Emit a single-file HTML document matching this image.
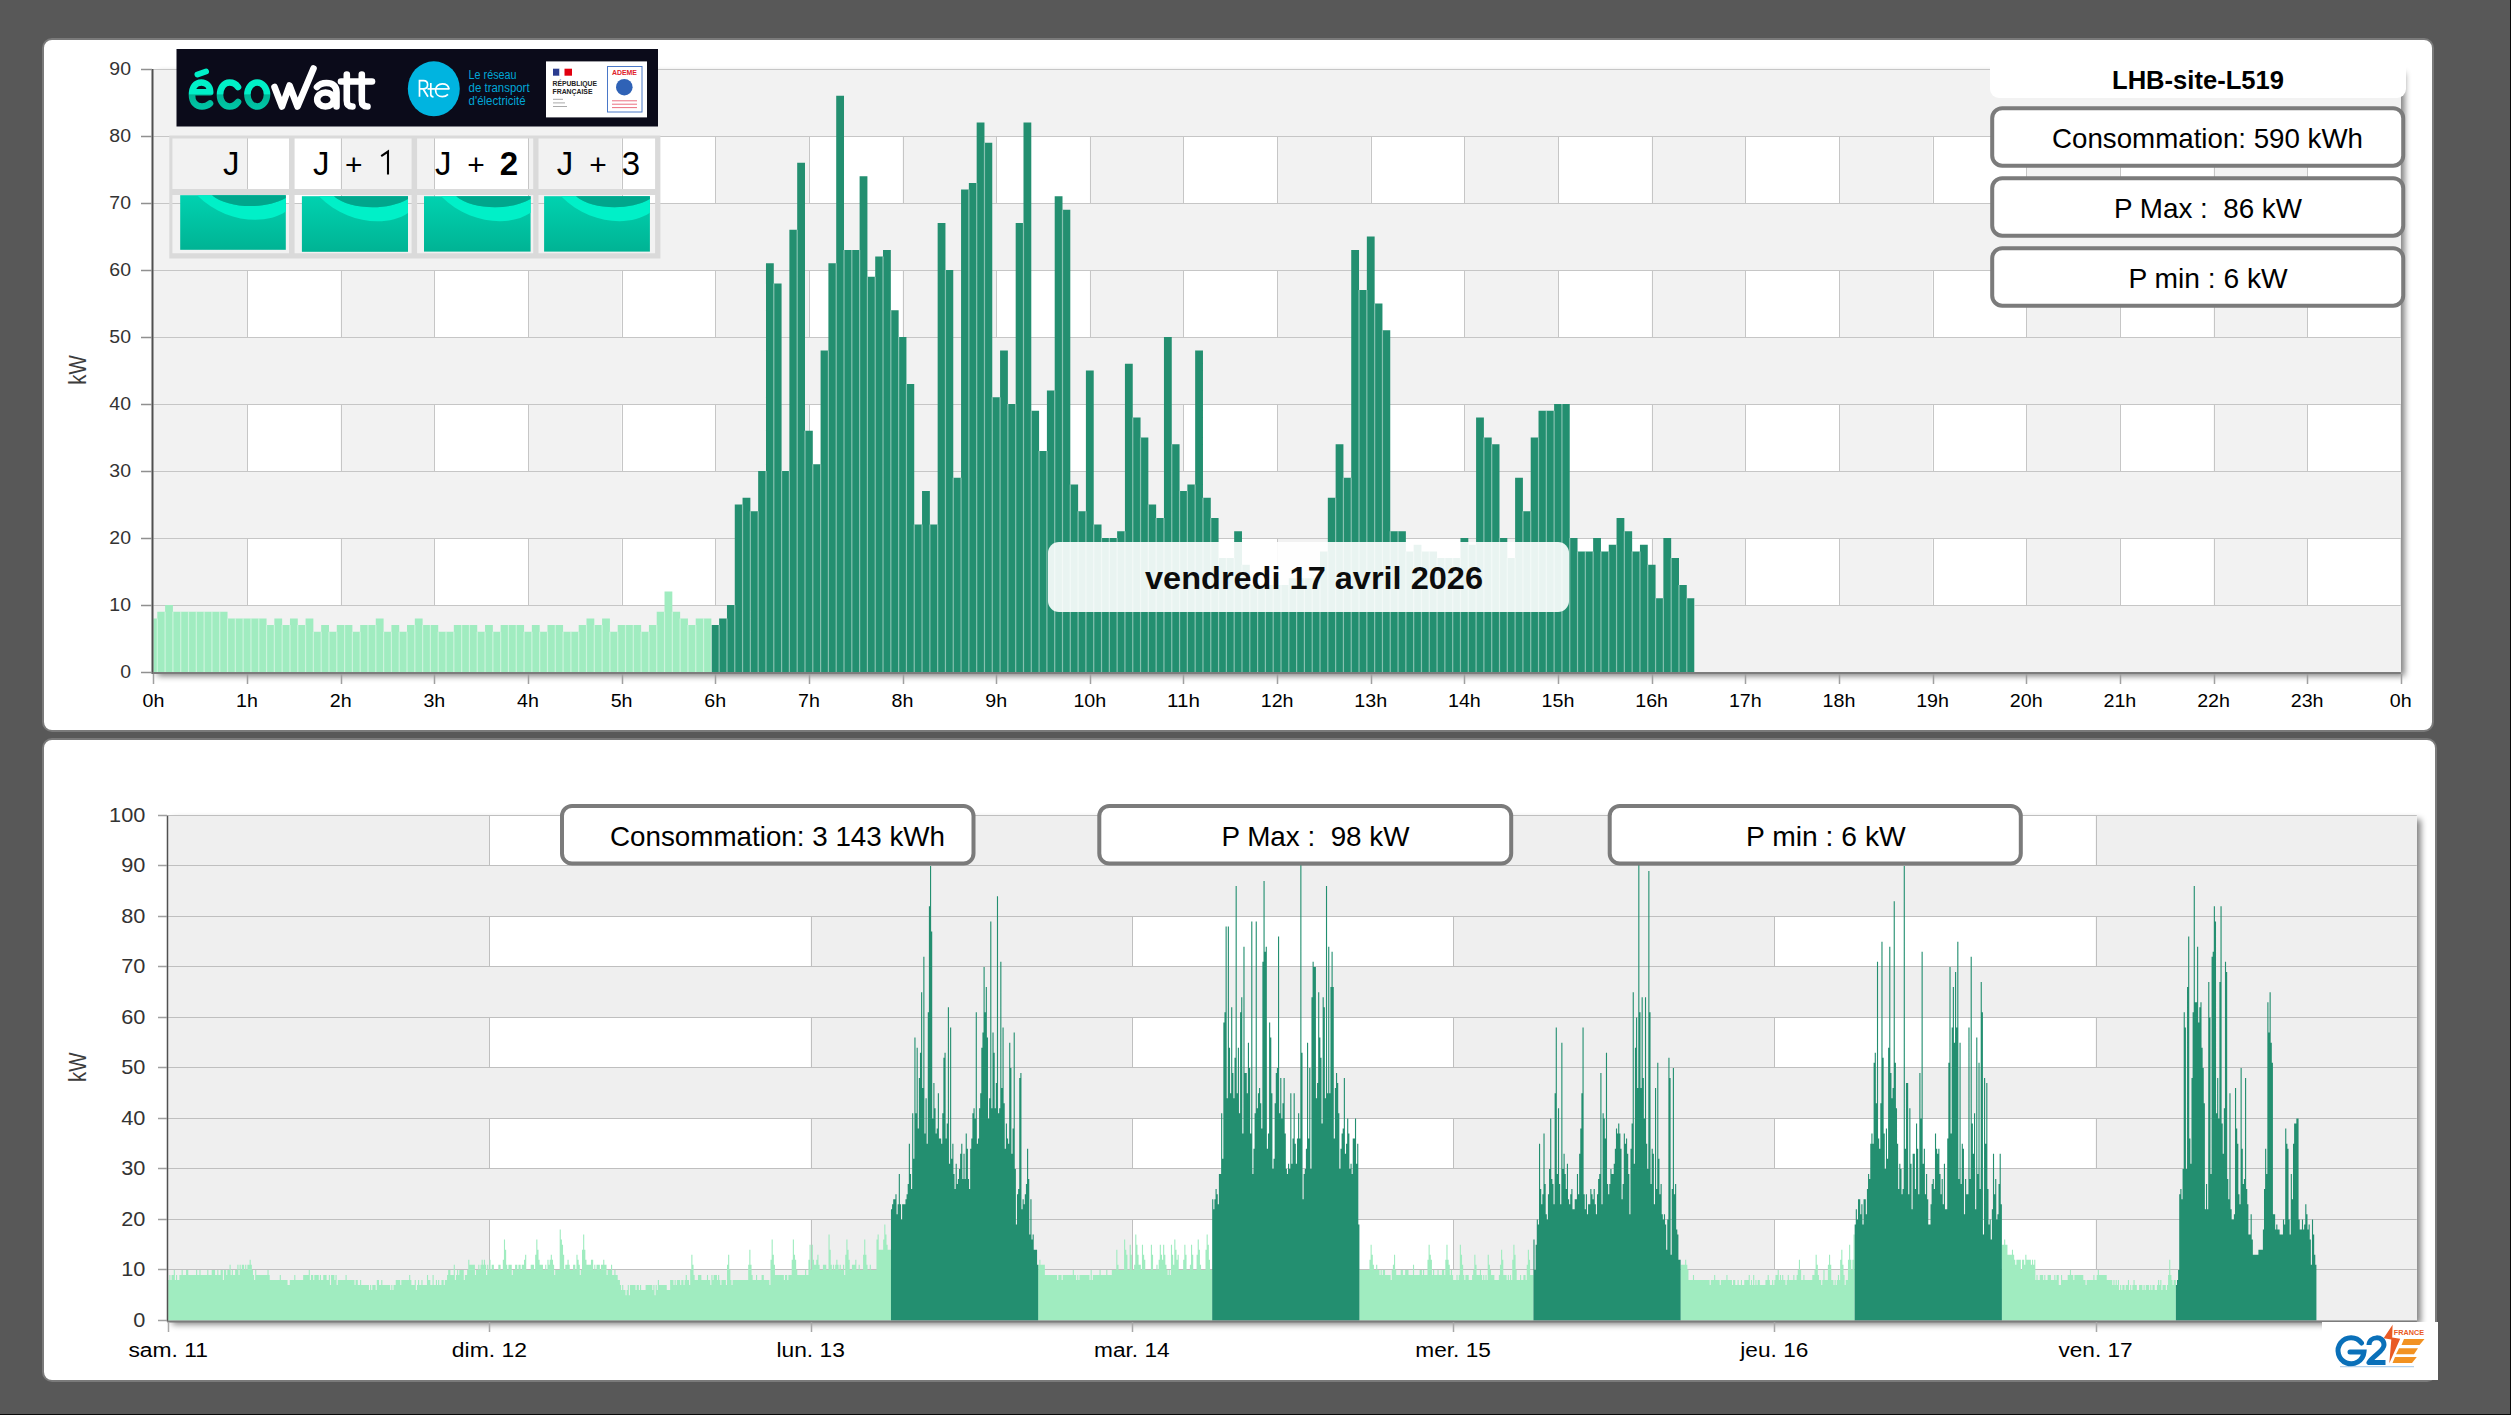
<!DOCTYPE html><html><head><meta charset="utf-8"><style>html,body{margin:0;padding:0;background:#585858;width:2511px;height:1415px;overflow:hidden}svg{display:block;font-family:"Liberation Sans", sans-serif}</style></head><body>
<svg width="2511" height="1415" viewBox="0 0 2511 1415">
<defs>
<filter id="psh" x="-5%" y="-5%" width="110%" height="115%"><feGaussianBlur in="SourceAlpha" stdDeviation="3.2"/><feOffset dx="4" dy="4"/><feComponentTransfer><feFuncA type="linear" slope="0.5"/></feComponentTransfer><feMerge><feMergeNode/></feMerge></filter>
<filter id="bsh" x="-10%" y="-30%" width="120%" height="160%"><feGaussianBlur in="SourceAlpha" stdDeviation="1.8"/><feOffset dx="2.5" dy="2.5"/><feComponentTransfer><feFuncA type="linear" slope="0.3"/></feComponentTransfer><feMerge><feMergeNode/><feMergeNode in="SourceGraphic"/></feMerge></filter>
<linearGradient id="tealg" x1="0" y1="0" x2="0" y2="1"><stop offset="0" stop-color="#00d2b0"/><stop offset="1" stop-color="#00b394"/></linearGradient>
<linearGradient id="ecog" gradientUnits="userSpaceOnUse" x1="0" y1="70" x2="0" y2="110"><stop offset="0.6" stop-color="#00f0c8"/><stop offset="0.62" stop-color="#00b596"/><stop offset="1" stop-color="#00c8a8"/></linearGradient>
</defs>
<rect x="0" y="0" width="2511" height="1415" fill="#585858"/>
<rect x="2510" y="0" width="1" height="1415" fill="#0a0a0a"/>
<rect x="0" y="1414" width="2511" height="1" fill="#0a0a0a"/>
<rect x="43" y="39" width="2390" height="692" rx="9" fill="#fff" stroke="#7a7a7a" stroke-width="2"/>
<rect x="43" y="739" width="2393" height="642" rx="9" fill="#fff" stroke="#7a7a7a" stroke-width="2"/>
<rect x="153.4" y="69" width="2247.4" height="603" fill="#000" filter="url(#psh)"/>
<rect x="153.4" y="69" width="2247.4" height="603" fill="#fff"/>
<rect x="153.4" y="69" width="93.64" height="603" fill="#f2f2f2"/>
<rect x="340.68" y="69" width="93.64" height="603" fill="#f2f2f2"/>
<rect x="527.97" y="69" width="93.64" height="603" fill="#f2f2f2"/>
<rect x="715.25" y="69" width="93.64" height="603" fill="#f2f2f2"/>
<rect x="902.53" y="69" width="93.64" height="603" fill="#f2f2f2"/>
<rect x="1089.82" y="69" width="93.64" height="603" fill="#f2f2f2"/>
<rect x="1277.1" y="69" width="93.64" height="603" fill="#f2f2f2"/>
<rect x="1464.38" y="69" width="93.64" height="603" fill="#f2f2f2"/>
<rect x="1651.67" y="69" width="93.64" height="603" fill="#f2f2f2"/>
<rect x="1838.95" y="69" width="93.64" height="603" fill="#f2f2f2"/>
<rect x="2026.23" y="69" width="93.64" height="603" fill="#f2f2f2"/>
<rect x="2213.52" y="69" width="93.64" height="603" fill="#f2f2f2"/>
<path d="M247.5 69V672M341.5 69V672M434.5 69V672M528.5 69V672M622.5 69V672M715.5 69V672M809.5 69V672M903.5 69V672M996.5 69V672M1090.5 69V672M1183.5 69V672M1277.5 69V672M1371.5 69V672M1464.5 69V672M1558.5 69V672M1652.5 69V672M1745.5 69V672M1839.5 69V672M1933.5 69V672M2026.5 69V672M2120.5 69V672M2214.5 69V672M2307.5 69V672" stroke="#c6c6c6" stroke-width="1" fill="none"/>
<rect x="153.4" y="605" width="2247.4" height="67" fill="#f2f2f2"/>
<rect x="153.4" y="471" width="2247.4" height="67" fill="#f2f2f2"/>
<rect x="153.4" y="337" width="2247.4" height="67" fill="#f2f2f2"/>
<rect x="153.4" y="203" width="2247.4" height="67" fill="#f2f2f2"/>
<rect x="153.4" y="69" width="2247.4" height="67" fill="#f2f2f2"/>
<path d="M153.4 672.5H2400.8M153.4 605.5H2400.8M153.4 538.5H2400.8M153.4 471.5H2400.8M153.4 404.5H2400.8M153.4 337.5H2400.8M153.4 270.5H2400.8M153.4 203.5H2400.8M153.4 136.5H2400.8M153.4 69.5H2400.8" stroke="#c6c6c6" stroke-width="1" fill="none"/>
<path d="M153.4 618.4H157.3V672H153.4ZM157.3 611.7H165.11V672H157.3ZM165.11 605H172.91V672H165.11ZM172.91 611.7H180.71V672H172.91ZM180.71 611.7H188.52V672H180.71ZM188.52 611.7H196.32V672H188.52ZM196.32 611.7H204.12V672H196.32ZM204.12 611.7H211.93V672H204.12ZM211.93 611.7H219.73V672H211.93ZM219.73 611.7H227.53V672H219.73ZM227.53 618.4H235.34V672H227.53ZM235.34 618.4H243.14V672H235.34ZM243.14 618.4H250.94V672H243.14ZM250.94 618.4H258.75V672H250.94ZM258.75 618.4H266.55V672H258.75ZM266.55 625.1H274.35V672H266.55ZM274.35 618.4H282.16V672H274.35ZM282.16 625.1H289.96V672H282.16ZM289.96 618.4H297.76V672H289.96ZM297.76 625.1H305.57V672H297.76ZM305.57 618.4H313.37V672H305.57ZM313.37 631.8H321.17V672H313.37ZM321.17 625.1H328.98V672H321.17ZM328.98 631.8H336.78V672H328.98ZM336.78 625.1H344.59V672H336.78ZM344.59 625.1H352.39V672H344.59ZM352.39 631.8H360.19V672H352.39ZM360.19 625.1H368V672H360.19ZM368 625.1H375.8V672H368ZM375.8 618.4H383.6V672H375.8ZM383.6 631.8H391.41V672H383.6ZM391.41 625.1H399.21V672H391.41ZM399.21 631.8H407.01V672H399.21ZM407.01 625.1H414.82V672H407.01ZM414.82 618.4H422.62V672H414.82ZM422.62 625.1H430.42V672H422.62ZM430.42 625.1H438.23V672H430.42ZM438.23 631.8H446.03V672H438.23ZM446.03 631.8H453.83V672H446.03ZM453.83 625.1H461.64V672H453.83ZM461.64 625.1H469.44V672H461.64ZM469.44 625.1H477.24V672H469.44ZM477.24 631.8H485.05V672H477.24ZM485.05 625.1H492.85V672H485.05ZM492.85 631.8H500.65V672H492.85ZM500.65 625.1H508.46V672H500.65ZM508.46 625.1H516.26V672H508.46ZM516.26 625.1H524.06V672H516.26ZM524.06 631.8H531.87V672H524.06ZM531.87 625.1H539.67V672H531.87ZM539.67 631.8H547.48V672H539.67ZM547.48 625.1H555.28V672H547.48ZM555.28 625.1H563.08V672H555.28ZM563.08 631.8H570.89V672H563.08ZM570.89 631.8H578.69V672H570.89ZM578.69 625.1H586.49V672H578.69ZM586.49 618.4H594.3V672H586.49ZM594.3 625.1H602.1V672H594.3ZM602.1 618.4H609.9V672H602.1ZM609.9 631.8H617.71V672H609.9ZM617.71 625.1H625.51V672H617.71ZM625.51 625.1H633.31V672H625.51ZM633.31 625.1H641.12V672H633.31ZM641.12 631.8H648.92V672H641.12ZM648.92 625.1H656.72V672H648.92ZM656.72 611.7H664.53V672H656.72ZM664.53 591.6H672.33V672H664.53ZM672.33 611.7H680.13V672H672.33ZM680.13 618.4H687.94V672H680.13ZM687.94 625.1H695.74V672H687.94ZM695.74 618.4H703.54V672H695.74ZM703.54 618.4H711.35V672H703.54Z" fill="#a0ecc0"/>
<path d="M711.35 625.1H719.15V672H711.35ZM719.15 618.4H726.96V672H719.15ZM726.96 605H734.76V672H726.96ZM734.76 504.5H742.56V672H734.76ZM742.56 497.8H750.37V672H742.56ZM750.37 511.2H758.17V672H750.37ZM758.17 471H765.97V672H758.17ZM765.97 263.3H773.78V672H765.97ZM773.78 283.4H781.58V672H773.78ZM781.58 471H789.38V672H781.58ZM789.38 229.8H797.19V672H789.38ZM797.19 162.8H804.99V672H797.19ZM804.99 430.8H812.79V672H804.99ZM812.79 464.3H820.6V672H812.79ZM820.6 350.4H828.4V672H820.6ZM828.4 263.3H836.2V672H828.4ZM836.2 95.8H844.01V672H836.2ZM844.01 249.9H851.81V672H844.01ZM851.81 249.9H859.61V672H851.81ZM859.61 176.2H867.42V672H859.61ZM867.42 276.7H875.22V672H867.42ZM875.22 256.6H883.02V672H875.22ZM883.02 249.9H890.83V672H883.02ZM890.83 310.2H898.63V672H890.83ZM898.63 337H906.44V672H898.63ZM906.44 383.9H914.24V672H906.44ZM914.24 524.6H922.04V672H914.24ZM922.04 491.1H929.85V672H922.04ZM929.85 524.6H937.65V672H929.85ZM937.65 223.1H945.45V672H937.65ZM945.45 270H953.26V672H945.45ZM953.26 477.7H961.06V672H953.26ZM961.06 189.6H968.86V672H961.06ZM968.86 182.9H976.67V672H968.86ZM976.67 122.6H984.47V672H976.67ZM984.47 142.7H992.27V672H984.47ZM992.27 397.3H1000.08V672H992.27ZM1000.08 350.4H1007.88V672H1000.08ZM1007.88 404H1015.68V672H1007.88ZM1015.68 223.1H1023.49V672H1015.68ZM1023.49 122.6H1031.29V672H1023.49ZM1031.29 410.7H1039.09V672H1031.29ZM1039.09 450.9H1046.9V672H1039.09ZM1046.9 390.6H1054.7V672H1046.9ZM1054.7 196.3H1062.5V672H1054.7ZM1062.5 209.7H1070.31V672H1062.5ZM1070.31 484.4H1078.11V672H1070.31ZM1078.11 511.2H1085.91V672H1078.11ZM1085.91 370.5H1093.72V672H1085.91ZM1093.72 524.6H1101.52V672H1093.72ZM1101.52 538H1109.33V672H1101.52ZM1109.33 538H1117.13V672H1109.33ZM1117.13 531.3H1124.93V672H1117.13ZM1124.93 363.8H1132.74V672H1124.93ZM1132.74 417.4H1140.54V672H1132.74ZM1140.54 437.5H1148.34V672H1140.54ZM1148.34 504.5H1156.15V672H1148.34ZM1156.15 517.9H1163.95V672H1156.15ZM1163.95 337H1171.75V672H1163.95ZM1171.75 444.2H1179.56V672H1171.75ZM1179.56 491.1H1187.36V672H1179.56ZM1187.36 484.4H1195.16V672H1187.36ZM1195.16 350.4H1202.97V672H1195.16ZM1202.97 497.8H1210.77V672H1202.97ZM1210.77 517.9H1218.57V672H1210.77ZM1218.57 558.1H1226.38V672H1218.57ZM1226.38 558.1H1234.18V672H1226.38ZM1234.18 531.3H1241.98V672H1234.18ZM1241.98 564.8H1249.79V672H1241.98ZM1249.79 584.9H1257.59V672H1249.79ZM1257.59 584.9H1265.39V672H1257.59ZM1265.39 584.9H1273.2V672H1265.39ZM1273.2 584.9H1281V672H1273.2ZM1281 584.9H1288.81V672H1281ZM1288.81 578.2H1296.61V672H1288.81ZM1296.61 578.2H1304.41V672H1296.61ZM1304.41 578.2H1312.22V672H1304.41ZM1312.22 578.2H1320.02V672H1312.22ZM1320.02 551.4H1327.82V672H1320.02ZM1327.82 497.8H1335.63V672H1327.82ZM1335.63 444.2H1343.43V672H1335.63ZM1343.43 477.7H1351.23V672H1343.43ZM1351.23 249.9H1359.04V672H1351.23ZM1359.04 290.1H1366.84V672H1359.04ZM1366.84 236.5H1374.64V672H1366.84ZM1374.64 303.5H1382.45V672H1374.64ZM1382.45 330.3H1390.25V672H1382.45ZM1390.25 531.3H1398.05V672H1390.25ZM1398.05 531.3H1405.86V672H1398.05ZM1405.86 551.4H1413.66V672H1405.86ZM1413.66 544.7H1421.46V672H1413.66ZM1421.46 551.4H1429.27V672H1421.46ZM1429.27 551.4H1437.07V672H1429.27ZM1437.07 558.1H1444.87V672H1437.07ZM1444.87 558.1H1452.68V672H1444.87ZM1452.68 558.1H1460.48V672H1452.68ZM1460.48 538H1468.29V672H1460.48ZM1468.29 544.7H1476.09V672H1468.29ZM1476.09 417.4H1483.89V672H1476.09ZM1483.89 437.5H1491.7V672H1483.89ZM1491.7 444.2H1499.5V672H1491.7ZM1499.5 538H1507.3V672H1499.5ZM1507.3 558.1H1515.11V672H1507.3ZM1515.11 477.7H1522.91V672H1515.11ZM1522.91 511.2H1530.71V672H1522.91ZM1530.71 437.5H1538.52V672H1530.71ZM1538.52 410.7H1546.32V672H1538.52ZM1546.32 410.7H1554.12V672H1546.32ZM1554.12 404H1561.93V672H1554.12ZM1561.93 404H1569.73V672H1561.93ZM1569.73 538H1577.53V672H1569.73ZM1577.53 551.4H1585.34V672H1577.53ZM1585.34 551.4H1593.14V672H1585.34ZM1593.14 538H1600.94V672H1593.14ZM1600.94 551.4H1608.75V672H1600.94ZM1608.75 544.7H1616.55V672H1608.75ZM1616.55 517.9H1624.35V672H1616.55ZM1624.35 531.3H1632.16V672H1624.35ZM1632.16 551.4H1639.96V672H1632.16ZM1639.96 544.7H1647.76V672H1639.96ZM1647.76 564.8H1655.57V672H1647.76ZM1655.57 598.3H1663.37V672H1655.57ZM1663.37 538H1671.18V672H1663.37ZM1671.18 558.1H1678.98V672H1671.18ZM1678.98 584.9H1686.78V672H1678.98ZM1686.78 598.3H1694.59V672H1686.78Z" fill="#238f70"/>
<path d="M157.3 618.4V672M165.11 611.7V672M172.91 611.7V672M180.71 611.7V672M188.52 611.7V672M196.32 611.7V672M204.12 611.7V672M211.93 611.7V672M219.73 611.7V672M227.53 618.4V672M235.34 618.4V672M243.14 618.4V672M250.94 618.4V672M258.75 618.4V672M266.55 625.1V672M274.35 625.1V672M282.16 625.1V672M289.96 625.1V672M297.76 625.1V672M305.57 625.1V672M313.37 631.8V672M321.17 631.8V672M328.98 631.8V672M336.78 631.8V672M344.59 625.1V672M352.39 631.8V672M360.19 631.8V672M368 625.1V672M375.8 625.1V672M383.6 631.8V672M391.41 631.8V672M399.21 631.8V672M407.01 631.8V672M414.82 625.1V672M422.62 625.1V672M430.42 625.1V672M438.23 631.8V672M446.03 631.8V672M453.83 631.8V672M461.64 625.1V672M469.44 625.1V672M477.24 631.8V672M485.05 631.8V672M492.85 631.8V672M500.65 631.8V672M508.46 625.1V672M516.26 625.1V672M524.06 631.8V672M531.87 631.8V672M539.67 631.8V672M547.48 631.8V672M555.28 625.1V672M563.08 631.8V672M570.89 631.8V672M578.69 631.8V672M586.49 625.1V672M594.3 625.1V672M602.1 625.1V672M609.9 631.8V672M617.71 631.8V672M625.51 625.1V672M633.31 625.1V672M641.12 631.8V672M648.92 631.8V672M656.72 625.1V672M664.53 611.7V672M672.33 611.7V672M680.13 618.4V672M687.94 625.1V672M695.74 625.1V672M703.54 618.4V672M711.35 625.1V672M719.15 625.1V672M726.96 618.4V672M734.76 605V672M742.56 504.5V672M750.37 511.2V672M758.17 511.2V672M765.97 471V672M773.78 283.4V672M781.58 471V672M789.38 471V672M797.19 229.8V672M804.99 430.8V672M812.79 464.3V672M820.6 464.3V672M828.4 350.4V672M836.2 263.3V672M844.01 249.9V672M851.81 249.9V672M859.61 249.9V672M867.42 276.7V672M875.22 276.7V672M883.02 256.6V672M890.83 310.2V672M898.63 337V672M906.44 383.9V672M914.24 524.6V672M922.04 524.6V672M929.85 524.6V672M937.65 524.6V672M945.45 270V672M953.26 477.7V672M961.06 477.7V672M968.86 189.6V672M976.67 182.9V672M984.47 142.7V672M992.27 397.3V672M1000.08 397.3V672M1007.88 404V672M1015.68 404V672M1023.49 223.1V672M1031.29 410.7V672M1039.09 450.9V672M1046.9 450.9V672M1054.7 390.6V672M1062.5 209.7V672M1070.31 484.4V672M1078.11 511.2V672M1085.91 511.2V672M1093.72 524.6V672M1101.52 538V672M1109.33 538V672M1117.13 538V672M1124.93 531.3V672M1132.74 417.4V672M1140.54 437.5V672M1148.34 504.5V672M1156.15 517.9V672M1163.95 517.9V672M1171.75 444.2V672M1179.56 491.1V672M1187.36 491.1V672M1195.16 484.4V672M1202.97 497.8V672M1210.77 517.9V672M1218.57 558.1V672M1226.38 558.1V672M1234.18 558.1V672M1241.98 564.8V672M1249.79 584.9V672M1257.59 584.9V672M1265.39 584.9V672M1273.2 584.9V672M1281 584.9V672M1288.81 584.9V672M1296.61 578.2V672M1304.41 578.2V672M1312.22 578.2V672M1320.02 578.2V672M1327.82 551.4V672M1335.63 497.8V672M1343.43 477.7V672M1351.23 477.7V672M1359.04 290.1V672M1366.84 290.1V672M1374.64 303.5V672M1382.45 330.3V672M1390.25 531.3V672M1398.05 531.3V672M1405.86 551.4V672M1413.66 551.4V672M1421.46 551.4V672M1429.27 551.4V672M1437.07 558.1V672M1444.87 558.1V672M1452.68 558.1V672M1460.48 558.1V672M1468.29 544.7V672M1476.09 544.7V672M1483.89 437.5V672M1491.7 444.2V672M1499.5 538V672M1507.3 558.1V672M1515.11 558.1V672M1522.91 511.2V672M1530.71 511.2V672M1538.52 437.5V672M1546.32 410.7V672M1554.12 410.7V672M1561.93 404V672M1569.73 538V672M1577.53 551.4V672M1585.34 551.4V672M1593.14 551.4V672M1600.94 551.4V672M1608.75 551.4V672M1616.55 544.7V672M1624.35 531.3V672M1632.16 551.4V672M1639.96 551.4V672M1647.76 564.8V672M1655.57 598.3V672M1663.37 598.3V672M1671.18 558.1V672M1678.98 584.9V672M1686.78 598.3V672M1694.59 598.3V672" stroke="#fff" stroke-opacity="0.45" stroke-width="1.2" fill="none"/>
<path d="M152.5 69V674" stroke="#505050" stroke-width="2"/>
<path d="M152.4 673H2400.8" stroke="#7c7c7c" stroke-width="2"/>
<path d="M141 672.5H152M141 605.5H152M141 538.5H152M141 471.5H152M141 404.5H152M141 337.5H152M141 270.5H152M141 203.5H152M141 136.5H152M141 69.5H152" stroke="#909090" stroke-width="1.3"/>
<path d="M153.5 674V684M247.5 674V684M341.5 674V684M434.5 674V684M528.5 674V684M622.5 674V684M715.5 674V684M809.5 674V684M903.5 674V684M996.5 674V684M1090.5 674V684M1183.5 674V684M1277.5 674V684M1371.5 674V684M1464.5 674V684M1558.5 674V684M1652.5 674V684M1745.5 674V684M1839.5 674V684M1933.5 674V684M2026.5 674V684M2120.5 674V684M2214.5 674V684M2307.5 674V684M2401.5 674V684" stroke="#a0a0a0" stroke-width="1.5"/>
<text x="131" y="678.2" font-size="17.5" fill="#333" text-anchor="end" font-weight="normal" textLength="10.82" lengthAdjust="spacingAndGlyphs" >0</text>
<text x="131" y="611.2" font-size="17.5" fill="#333" text-anchor="end" font-weight="normal" textLength="21.63" lengthAdjust="spacingAndGlyphs" >10</text>
<text x="131" y="544.2" font-size="17.5" fill="#333" text-anchor="end" font-weight="normal" textLength="21.63" lengthAdjust="spacingAndGlyphs" >20</text>
<text x="131" y="477.2" font-size="17.5" fill="#333" text-anchor="end" font-weight="normal" textLength="21.63" lengthAdjust="spacingAndGlyphs" >30</text>
<text x="131" y="410.2" font-size="17.5" fill="#333" text-anchor="end" font-weight="normal" textLength="21.63" lengthAdjust="spacingAndGlyphs" >40</text>
<text x="131" y="343.2" font-size="17.5" fill="#333" text-anchor="end" font-weight="normal" textLength="21.63" lengthAdjust="spacingAndGlyphs" >50</text>
<text x="131" y="276.2" font-size="17.5" fill="#333" text-anchor="end" font-weight="normal" textLength="21.63" lengthAdjust="spacingAndGlyphs" >60</text>
<text x="131" y="209.2" font-size="17.5" fill="#333" text-anchor="end" font-weight="normal" textLength="21.63" lengthAdjust="spacingAndGlyphs" >70</text>
<text x="131" y="142.2" font-size="17.5" fill="#333" text-anchor="end" font-weight="normal" textLength="21.63" lengthAdjust="spacingAndGlyphs" >80</text>
<text x="131" y="75.2" font-size="17.5" fill="#333" text-anchor="end" font-weight="normal" textLength="21.63" lengthAdjust="spacingAndGlyphs" >90</text>
<text x="153.4" y="706.8" font-size="18.5" fill="#000" text-anchor="middle" font-weight="normal" textLength="21.84" lengthAdjust="spacingAndGlyphs" >0h</text>
<text x="247.04" y="706.8" font-size="18.5" fill="#000" text-anchor="middle" font-weight="normal" textLength="21.84" lengthAdjust="spacingAndGlyphs" >1h</text>
<text x="340.68" y="706.8" font-size="18.5" fill="#000" text-anchor="middle" font-weight="normal" textLength="21.84" lengthAdjust="spacingAndGlyphs" >2h</text>
<text x="434.33" y="706.8" font-size="18.5" fill="#000" text-anchor="middle" font-weight="normal" textLength="21.84" lengthAdjust="spacingAndGlyphs" >3h</text>
<text x="527.97" y="706.8" font-size="18.5" fill="#000" text-anchor="middle" font-weight="normal" textLength="21.84" lengthAdjust="spacingAndGlyphs" >4h</text>
<text x="621.61" y="706.8" font-size="18.5" fill="#000" text-anchor="middle" font-weight="normal" textLength="21.84" lengthAdjust="spacingAndGlyphs" >5h</text>
<text x="715.25" y="706.8" font-size="18.5" fill="#000" text-anchor="middle" font-weight="normal" textLength="21.84" lengthAdjust="spacingAndGlyphs" >6h</text>
<text x="808.89" y="706.8" font-size="18.5" fill="#000" text-anchor="middle" font-weight="normal" textLength="21.84" lengthAdjust="spacingAndGlyphs" >7h</text>
<text x="902.53" y="706.8" font-size="18.5" fill="#000" text-anchor="middle" font-weight="normal" textLength="21.84" lengthAdjust="spacingAndGlyphs" >8h</text>
<text x="996.17" y="706.8" font-size="18.5" fill="#000" text-anchor="middle" font-weight="normal" textLength="21.84" lengthAdjust="spacingAndGlyphs" >9h</text>
<text x="1089.82" y="706.8" font-size="18.5" fill="#000" text-anchor="middle" font-weight="normal" textLength="32.79" lengthAdjust="spacingAndGlyphs" >10h</text>
<text x="1183.46" y="706.8" font-size="18.5" fill="#000" text-anchor="middle" font-weight="normal" textLength="32.79" lengthAdjust="spacingAndGlyphs" >11h</text>
<text x="1277.1" y="706.8" font-size="18.5" fill="#000" text-anchor="middle" font-weight="normal" textLength="32.79" lengthAdjust="spacingAndGlyphs" >12h</text>
<text x="1370.74" y="706.8" font-size="18.5" fill="#000" text-anchor="middle" font-weight="normal" textLength="32.79" lengthAdjust="spacingAndGlyphs" >13h</text>
<text x="1464.38" y="706.8" font-size="18.5" fill="#000" text-anchor="middle" font-weight="normal" textLength="32.79" lengthAdjust="spacingAndGlyphs" >14h</text>
<text x="1558.03" y="706.8" font-size="18.5" fill="#000" text-anchor="middle" font-weight="normal" textLength="32.79" lengthAdjust="spacingAndGlyphs" >15h</text>
<text x="1651.67" y="706.8" font-size="18.5" fill="#000" text-anchor="middle" font-weight="normal" textLength="32.79" lengthAdjust="spacingAndGlyphs" >16h</text>
<text x="1745.31" y="706.8" font-size="18.5" fill="#000" text-anchor="middle" font-weight="normal" textLength="32.79" lengthAdjust="spacingAndGlyphs" >17h</text>
<text x="1838.95" y="706.8" font-size="18.5" fill="#000" text-anchor="middle" font-weight="normal" textLength="32.79" lengthAdjust="spacingAndGlyphs" >18h</text>
<text x="1932.59" y="706.8" font-size="18.5" fill="#000" text-anchor="middle" font-weight="normal" textLength="32.79" lengthAdjust="spacingAndGlyphs" >19h</text>
<text x="2026.23" y="706.8" font-size="18.5" fill="#000" text-anchor="middle" font-weight="normal" textLength="32.79" lengthAdjust="spacingAndGlyphs" >20h</text>
<text x="2119.88" y="706.8" font-size="18.5" fill="#000" text-anchor="middle" font-weight="normal" textLength="32.79" lengthAdjust="spacingAndGlyphs" >21h</text>
<text x="2213.52" y="706.8" font-size="18.5" fill="#000" text-anchor="middle" font-weight="normal" textLength="32.79" lengthAdjust="spacingAndGlyphs" >22h</text>
<text x="2307.16" y="706.8" font-size="18.5" fill="#000" text-anchor="middle" font-weight="normal" textLength="32.79" lengthAdjust="spacingAndGlyphs" >23h</text>
<text x="2400.8" y="706.8" font-size="18.5" fill="#000" text-anchor="middle" font-weight="normal" textLength="21.84" lengthAdjust="spacingAndGlyphs" >0h</text>
<text x="0" y="0" font-size="23" fill="#3c3c3c" text-anchor="middle" transform="translate(86 370) rotate(-90)" textLength="29.4" lengthAdjust="spacingAndGlyphs">kW</text>
<rect x="1048" y="542" width="521" height="70" rx="11" fill="#fff" fill-opacity="0.9"/>
<text x="1314" y="589" font-size="32" fill="#0c0c0c" text-anchor="middle" font-weight="bold" textLength="338" lengthAdjust="spacingAndGlyphs" >vendredi 17 avril 2026</text>
<rect x="1990" y="56" width="416" height="42" rx="9" fill="#fff"/>
<text x="2198" y="89" font-size="25" fill="#000" text-anchor="middle" font-weight="bold" textLength="172" lengthAdjust="spacingAndGlyphs" >LHB-site-L519</text>
<rect x="1992.2" y="108.2" width="411" height="57.5" rx="10" fill="#fff" stroke="#7b7b7b" stroke-width="4"/>
<text x="2207.5" y="148.3" font-size="28" fill="#000" text-anchor="middle" font-weight="normal" textLength="311" lengthAdjust="spacingAndGlyphs" >Consommation: 590 kWh</text>
<rect x="1992.2" y="178.2" width="411" height="57.5" rx="10" fill="#fff" stroke="#7b7b7b" stroke-width="4"/>
<text x="2208" y="218.3" font-size="28" fill="#000" text-anchor="middle" font-weight="normal" textLength="188" lengthAdjust="spacingAndGlyphs" >P Max :&#160; 86 kW</text>
<rect x="1992.2" y="248.2" width="411" height="57.5" rx="10" fill="#fff" stroke="#7b7b7b" stroke-width="4"/>
<text x="2208.05" y="288.3" font-size="28" fill="#000" text-anchor="middle" font-weight="normal" textLength="159.3" lengthAdjust="spacingAndGlyphs" >P min : 6 kW</text>
<rect x="176.5" y="49" width="481.5" height="77.5" fill="#0b0b1a"/>
<g fill="none" stroke-linecap="round" stroke-linejoin="round" stroke-width="6.6">
<path d="M192.5 92.2 H210.2 C210.2 86 206 82.5 201.4 82.5 C195.6 82.5 192 87 192 95 C192 102.5 196.5 106.5 202 106.5 C205.5 106.5 208 105.2 210 103.5" stroke="url(#ecog)"/>
<path d="M197.5 74.5 L206 71.5" stroke="#00f0c8" stroke-width="6"/>
<path d="M238 87 C236 84 233 82.5 229.5 82.5 C224 82.5 220 87.5 220 95 C220 101.5 224 106.5 229.5 106.5 C233 106.5 236 104.8 238 102" stroke="url(#ecog)"/>
<ellipse cx="257.2" cy="94.5" rx="9.8" ry="12" stroke="url(#ecog)"/>
<path d="M274.5 87 L282 106.5 L289.5 85.5 L297.5 106.5 L313.5 68.5" stroke="#fff"/>
<path d="M317 87 C319.5 84 322.5 83 326.5 83 C333 83 336.5 86.5 336.5 92 V106.5" stroke="#fff"/>
<ellipse cx="325.5" cy="99.5" rx="8.3" ry="7" stroke="#fff"/>
<path d="M346.8 74.5 V100.5 C346.8 104.5 348.5 106.5 352.5 106.5" stroke="#fff"/>
<path d="M361.8 74.5 V100.5 C361.8 104.5 363.5 106.5 367.5 106.5" stroke="#fff"/>
<path d="M341 81.5 H372" stroke="#fff"/>
</g>
<ellipse cx="433.8" cy="88.8" rx="26" ry="27.5" fill="#00b4e0"/>
<g fill="none" stroke="#fff" stroke-width="1.7"><path d="M419.5 96.8 V80.6 H423.5 C426.2 80.6 427.6 82.3 427.6 84.7 C427.6 87.2 426 88.8 423.3 88.8 H419.5 M423 88.8 L428 96.8"/><path d="M430.8 83 V94.5 C430.8 96.2 431.8 96.8 433.5 96.8"/><path d="M427.5 88.9 H449.5"/><path d="M449 88.9 C448.5 85.8 445.8 83.8 442.3 83.8 C438.5 83.8 435.6 86.6 435.6 90.2 C435.6 94 438.5 96.6 442.3 96.6 C444.6 96.6 446.6 95.7 448 94.3"/></g>
<text x="468.6" y="78.8" font-size="12.5" fill="#00a6d6" text-anchor="start" font-weight="normal" textLength="48" lengthAdjust="spacingAndGlyphs" >Le réseau</text>
<text x="468.6" y="92" font-size="12.5" fill="#00a6d6" text-anchor="start" font-weight="normal" textLength="61" lengthAdjust="spacingAndGlyphs" >de transport</text>
<text x="468.6" y="105.2" font-size="12.5" fill="#00a6d6" text-anchor="start" font-weight="normal" textLength="57" lengthAdjust="spacingAndGlyphs" >d'électricité</text>
<rect x="546" y="61.4" width="101" height="56" fill="#fff"/>
<rect x="553" y="68.7" width="6.5" height="7" fill="#2b3d90"/><rect x="559.5" y="68.7" width="5" height="7" fill="#fff"/><rect x="564.5" y="68.7" width="7.5" height="7" fill="#e1000f"/>
<text x="552.5" y="85.6" font-size="8" fill="#222" text-anchor="start" font-weight="bold" textLength="44.5" lengthAdjust="spacingAndGlyphs" >RÉPUBLIQUE</text>
<text x="552.5" y="93.6" font-size="8" fill="#222" text-anchor="start" font-weight="bold" textLength="40" lengthAdjust="spacingAndGlyphs" >FRANÇAISE</text>
<rect x="553" y="98.8" width="10" height="1" fill="#aaa"/>
<rect x="553" y="102.4" width="12" height="1" fill="#aaa"/>
<rect x="553" y="106" width="14" height="1" fill="#aaa"/>
<rect x="607.5" y="66.5" width="34.5" height="45.5" fill="#fff" stroke="#4a78c8" stroke-width="1"/>
<text x="624.5" y="74.8" font-size="6.5" fill="#e0202a" text-anchor="middle" font-weight="bold" textLength="25" lengthAdjust="spacingAndGlyphs" >ADEME</text>
<circle cx="624.3" cy="87.2" r="8.3" fill="#2f62b6"/>
<rect x="612" y="100.3" width="25" height="1" fill="#ec7080"/>
<rect x="612" y="103.7" width="25" height="1" fill="#ec7080"/>
<rect x="612" y="107.1" width="25" height="1" fill="#ec7080"/>
<path d="M169.3 135.4H660.4V258.6H169.3Z M172.4 138.6V189H289V138.6Z M294.6 138.6V189H411.6V138.6Z M417.1 138.6V189H533.2V138.6Z M538.5 138.6V189H655.1V138.6Z M172.4 195V253.3H289V195Z M294.6 195V253.3H411.6V195Z M417.1 195V253.3H533.2V195Z M538.5 195V253.3H655.1V195Z" fill="#dadada" fill-rule="evenodd"/>
<g><rect x="180.2" y="195.2" width="105.6" height="54.6" fill="url(#tealg)"/>
<path d="M197.1 195.2 H211.88 C227.72 208.3 264.68 209.94 285.8 197.93 V211.58 C264.68 225.78 224.55 222.5 197.1 195.2 Z" fill="#00f0c8"/>
<path d="M211.88 195.2 C227.72 208.3 264.68 209.94 285.8 197.93 V195.2 Z" fill="#00a68c"/>
</g>
<g><rect x="301.9" y="196.2" width="106.1" height="55.6" fill="url(#tealg)"/>
<path d="M318.88 196.2 H333.73 C349.64 209.54 386.78 211.21 408 198.98 V212.88 C386.78 227.34 346.46 224 318.88 196.2 Z" fill="#00f0c8"/>
<path d="M333.73 196.2 C349.64 209.54 386.78 211.21 408 198.98 V196.2 Z" fill="#00a68c"/>
</g>
<g><rect x="424" y="196.2" width="106.6" height="55.4" fill="url(#tealg)"/>
<path d="M441.06 196.2 H455.98 C471.97 209.5 509.28 211.16 530.6 198.97 V212.82 C509.28 227.22 468.77 223.9 441.06 196.2 Z" fill="#00f0c8"/>
<path d="M455.98 196.2 C471.97 209.5 509.28 211.16 530.6 198.97 V196.2 Z" fill="#00a68c"/>
</g>
<g><rect x="544.1" y="196.2" width="105.8" height="55.4" fill="url(#tealg)"/>
<path d="M561.03 196.2 H575.84 C591.71 209.5 628.74 211.16 649.9 198.97 V212.82 C628.74 227.22 588.54 223.9 561.03 196.2 Z" fill="#00f0c8"/>
<path d="M575.84 196.2 C591.71 209.5 628.74 211.16 649.9 198.97 V196.2 Z" fill="#00a68c"/>
</g>
<text x="231.2" y="174.6" font-size="33" fill="#000" text-anchor="middle" font-weight="normal" >J</text>
<text x="321.3" y="174.6" font-size="33" fill="#000" text-anchor="middle" font-weight="normal" >J</text>
<text x="353.7" y="174.6" font-size="30" fill="#000" text-anchor="middle" font-weight="normal" >+</text>
<text x="443.2" y="174.6" font-size="33" fill="#000" text-anchor="middle" font-weight="normal" >J</text>
<text x="476" y="174.6" font-size="30" fill="#000" text-anchor="middle" font-weight="normal" >+</text>
<text x="509" y="174.6" font-size="33" fill="#000" text-anchor="middle" font-weight="bold" >2</text>
<text x="564.9" y="174.6" font-size="33" fill="#000" text-anchor="middle" font-weight="normal" >J</text>
<text x="597.9" y="174.6" font-size="30" fill="#000" text-anchor="middle" font-weight="normal" >+</text>
<text x="630.9" y="174.6" font-size="33" fill="#000" text-anchor="middle" font-weight="normal" >3</text>
<path d="M381.2 156.2 L388 151.6 V174.6" fill="none" stroke="#000" stroke-width="2.1" stroke-linejoin="miter"/>
<rect x="168.2" y="815.4" width="2248.6" height="505" fill="#000" filter="url(#psh)"/>
<rect x="168.2" y="815.4" width="2248.6" height="505" fill="#fff"/>
<rect x="168.2" y="815.4" width="321.23" height="505" fill="#efefef"/>
<rect x="810.66" y="815.4" width="321.23" height="505" fill="#efefef"/>
<rect x="1453.11" y="815.4" width="321.23" height="505" fill="#efefef"/>
<rect x="2095.57" y="815.4" width="321.23" height="505" fill="#efefef"/>
<path d="M489.5 815.4V1320.4M811.5 815.4V1320.4M1132.5 815.4V1320.4M1453.5 815.4V1320.4M1774.5 815.4V1320.4M2096.5 815.4V1320.4" stroke="#bfbfbf" stroke-width="1" fill="none"/>
<rect x="168.2" y="1269.9" width="2248.6" height="50.5" fill="#efefef"/>
<rect x="168.2" y="1168.9" width="2248.6" height="50.5" fill="#efefef"/>
<rect x="168.2" y="1067.9" width="2248.6" height="50.5" fill="#efefef"/>
<rect x="168.2" y="966.9" width="2248.6" height="50.5" fill="#efefef"/>
<rect x="168.2" y="865.9" width="2248.6" height="50.5" fill="#efefef"/>
<path d="M168.2 1269.5H2416.8M168.2 1219.5H2416.8M168.2 1168.5H2416.8M168.2 1118.5H2416.8M168.2 1067.5H2416.8M168.2 1017.5H2416.8M168.2 966.5H2416.8M168.2 916.5H2416.8M168.2 865.5H2416.8M168.2 815.5H2416.8" stroke="#bfbfbf" stroke-width="1" fill="none"/>
<path d="M168.2 1320.4V1280H169.32V1274.95H170.43V1280H171.55V1274.95H172.66V1274.95H173.78V1269.9H174.89V1280H176.01V1274.95H177.12V1280H178.24V1280H179.35V1274.95H180.47V1274.95H181.58V1269.9H182.7V1274.95H183.82V1274.95H184.93V1274.95H186.05V1269.9H187.16V1269.9H188.28V1274.95H189.39V1274.95H190.51V1274.95H191.62V1274.95H192.74V1274.95H193.85V1274.95H194.97V1274.95H196.08V1269.9H197.2V1274.95H198.32V1274.95H199.43V1269.9H200.55V1274.95H201.66V1274.95H202.78V1274.95H203.89V1274.95H205.01V1274.95H206.12V1274.95H207.24V1269.9H208.35V1274.95H209.47V1274.95H210.58V1274.95H211.7V1269.9H212.82V1269.9H213.93V1269.9H215.05V1274.95H216.16V1274.95H217.28V1269.9H218.39V1274.95H219.51V1274.95H220.62V1269.9H221.74V1269.9H222.85V1280H223.97V1269.9H225.08V1269.9H226.2V1274.95H227.31V1269.9H228.43V1269.9H229.55V1264.85H230.66V1274.95H231.78V1269.9H232.89V1274.95H234.01V1274.95H235.12V1269.9H236.24V1269.9H237.35V1264.85H238.47V1274.95H239.58V1264.85H240.7V1269.9H241.81V1264.85H242.93V1264.85H244.05V1269.9H245.16V1264.85H246.28V1269.9H247.39V1264.85H248.51V1264.85H249.62V1259.8H250.74V1264.85H251.85V1269.9H252.97V1274.95H254.08V1280H255.2V1269.9H256.31V1274.95H257.43V1274.95H258.55V1274.95H259.66V1274.95H260.78V1274.95H261.89V1274.95H263.01V1274.95H264.12V1274.95H265.24V1274.95H266.35V1274.95H267.47V1269.9H268.58V1274.95H269.7V1280H270.81V1280H271.93V1280H273.05V1280H274.16V1280H275.28V1280H276.39V1280H277.51V1280H278.62V1280H279.74V1274.95H280.85V1280H281.97V1280H283.08V1280H284.2V1280H285.31V1280H286.43V1280H287.55V1285.05H288.66V1285.05H289.78V1280H290.89V1280H292.01V1280H293.12V1280H294.24V1274.95H295.35V1280H296.47V1280H297.58V1280H298.7V1280H299.81V1280H300.93V1280H302.05V1280H303.16V1274.95H304.28V1274.95H305.39V1274.95H306.51V1274.95H307.62V1274.95H308.74V1269.9H309.85V1280H310.97V1274.95H312.08V1274.95H313.2V1280H314.31V1274.95H315.43V1274.95H316.55V1274.95H317.66V1274.95H318.78V1280H319.89V1274.95H321.01V1280H322.12V1280H323.24V1274.95H324.35V1274.95H325.47V1274.95H326.58V1280H327.7V1280H328.81V1274.95H329.93V1285.05H331.05V1274.95H332.16V1274.95H333.28V1274.95H334.39V1280H335.51V1274.95H336.62V1285.05H337.74V1280H338.85V1280H339.97V1280H341.08V1280H342.2V1280H343.31V1280H344.43V1280H345.54V1274.95H346.66V1280H347.78V1280H348.89V1280H350.01V1280H351.12V1280H352.24V1280H353.35V1280H354.47V1285.05H355.58V1280H356.7V1280H357.81V1285.05H358.93V1285.05H360.04V1280H361.16V1285.05H362.28V1285.05H363.39V1285.05H364.51V1285.05H365.62V1285.05H366.74V1285.05H367.85V1285.05H368.97V1290.1H370.08V1285.05H371.2V1290.1H372.31V1285.05H373.43V1285.05H374.54V1285.05H375.66V1290.1H376.78V1280H377.89V1280H379.01V1285.05H380.12V1285.05H381.24V1280H382.35V1285.05H383.47V1285.05H384.58V1285.05H385.7V1285.05H386.81V1285.05H387.93V1285.05H389.04V1285.05H390.16V1290.1H391.28V1285.05H392.39V1290.1H393.51V1285.05H394.62V1285.05H395.74V1280H396.85V1280H397.97V1280H399.08V1280H400.2V1285.05H401.31V1280H402.43V1280H403.54V1280H404.66V1280H405.78V1280H406.89V1280H408.01V1280H409.12V1274.95H410.24V1280H411.35V1285.05H412.47V1285.05H413.58V1285.05H414.7V1280H415.81V1290.1H416.93V1285.05H418.04V1280H419.16V1285.05H420.28V1285.05H421.39V1280H422.51V1285.05H423.62V1285.05H424.74V1285.05H425.85V1285.05H426.97V1274.95H428.08V1280H429.2V1280H430.31V1285.05H431.43V1285.05H432.54V1274.95H433.66V1285.05H434.78V1285.05H435.89V1280H437.01V1285.05H438.12V1280H439.24V1285.05H440.35V1285.05H441.47V1280H442.58V1280H443.7V1285.05H444.81V1280H445.93V1280H447.04V1274.95H448.16V1269.9H449.28V1269.9H450.39V1274.95H451.51V1274.95H452.62V1274.95H453.74V1264.85H454.85V1280H455.97V1274.95H457.08V1269.9H458.2V1274.95H459.31V1269.9H460.43V1269.9H461.54V1269.9H462.66V1269.9H463.77V1280H464.89V1274.95H466.01V1274.95H467.12V1269.9H468.24V1259.8H469.35V1264.85H470.47V1264.85H471.58V1264.85H472.7V1264.85H473.81V1264.85H474.93V1274.95H476.04V1269.9H477.16V1269.9H478.27V1264.85H479.39V1269.9H480.51V1264.85H481.62V1259.8H482.74V1264.85H483.85V1259.8H484.97V1264.85H486.08V1274.95H487.2V1264.85H488.31V1269.9H489.43V1259.8H490.54V1269.9H491.66V1264.85H492.77V1264.85H493.89V1269.9H495.01V1269.9H496.12V1269.9H497.24V1269.9H498.35V1264.85H499.47V1264.85H500.58V1269.9H501.7V1269.9H502.81V1259.8H503.93V1239.6H505.04V1249.7H506.16V1264.85H507.27V1269.9H508.39V1264.85H509.51V1264.85H510.62V1264.85H511.74V1274.95H512.85V1269.9H513.97V1269.9H515.08V1264.85H516.2V1264.85H517.31V1269.9H518.43V1264.85H519.54V1264.85H520.66V1269.9H521.77V1264.85H522.89V1264.85H524.01V1259.8H525.12V1254.75H526.24V1269.9H527.35V1269.9H528.47V1269.9H529.58V1269.9H530.7V1264.85H531.81V1264.85H532.93V1264.85H534.04V1269.9H535.16V1254.75H536.27V1239.6H537.39V1249.7H538.51V1259.8H539.62V1264.85H540.74V1264.85H541.85V1264.85H542.97V1269.9H544.08V1269.9H545.2V1264.85H546.31V1269.9H547.43V1259.8H548.54V1264.85H549.66V1259.8H550.77V1254.75H551.89V1259.8H553.01V1264.85H554.12V1274.95H555.24V1269.9H556.35V1269.9H557.47V1269.9H558.58V1269.9H559.7V1229.5H560.81V1239.6H561.93V1244.65H563.04V1254.75H564.16V1269.9H565.27V1264.85H566.39V1264.85H567.5V1259.8H568.62V1264.85H569.74V1269.9H570.85V1269.9H571.97V1269.9H573.08V1264.85H574.2V1264.85H575.31V1269.9H576.43V1254.75H577.54V1259.8H578.66V1264.85H579.77V1274.95H580.89V1269.9H582V1249.7H583.12V1234.55H584.24V1249.7H585.35V1259.8H586.47V1264.85H587.58V1264.85H588.7V1264.85H589.81V1264.85H590.93V1259.8H592.04V1259.8H593.16V1269.9H594.27V1264.85H595.39V1269.9H596.5V1264.85H597.62V1264.85H598.74V1264.85H599.85V1269.9H600.97V1264.85H602.08V1264.85H603.2V1259.8H604.31V1264.85H605.43V1264.85H606.54V1274.95H607.66V1269.9H608.77V1269.9H609.89V1269.9H611V1264.85H612.12V1274.95H613.24V1274.95H614.35V1269.9H615.47V1274.95H616.58V1274.95H617.7V1280H618.81V1280H619.93V1285.05H621.04V1290.1H622.16V1285.05H623.27V1290.1H624.39V1290.1H625.5V1295.15H626.62V1290.1H627.74V1285.05H628.85V1295.15H629.97V1285.05H631.08V1285.05H632.2V1285.05H633.31V1285.05H634.43V1285.05H635.54V1290.1H636.66V1285.05H637.77V1285.05H638.89V1290.1H640V1285.05H641.12V1290.1H642.24V1290.1H643.35V1290.1H644.47V1290.1H645.58V1285.05H646.7V1285.05H647.81V1285.05H648.93V1285.05H650.04V1285.05H651.16V1285.05H652.27V1290.1H653.39V1285.05H654.5V1295.15H655.62V1285.05H656.74V1290.1H657.85V1280H658.97V1285.05H660.08V1285.05H661.2V1285.05H662.31V1285.05H663.43V1285.05H664.54V1285.05H665.66V1285.05H666.77V1290.1H667.89V1290.1H669V1290.1H670.12V1280H671.24V1280H672.35V1280H673.47V1285.05H674.58V1280H675.7V1285.05H676.81V1280H677.93V1280H679.04V1280H680.16V1285.05H681.27V1280H682.39V1280H683.5V1285.05H684.62V1280H685.73V1274.95H686.85V1280H687.97V1280H689.08V1285.05H690.2V1269.9H691.31V1254.75H692.43V1264.85H693.54V1274.95H694.66V1280H695.77V1280H696.89V1280H698V1274.95H699.12V1274.95H700.23V1274.95H701.35V1280H702.47V1280H703.58V1280H704.7V1280H705.81V1280H706.93V1274.95H708.04V1280H709.16V1280H710.27V1285.05H711.39V1274.95H712.5V1280H713.62V1274.95H714.73V1274.95H715.85V1274.95H716.97V1280H718.08V1274.95H719.2V1280H720.31V1285.05H721.43V1280H722.54V1280H723.66V1280H724.77V1280H725.89V1285.05H727V1264.85H728.12V1254.75H729.23V1269.9H730.35V1280H731.47V1285.05H732.58V1280H733.7V1280H734.81V1280H735.93V1280H737.04V1280H738.16V1280H739.27V1280H740.39V1280H741.5V1280H742.62V1280H743.73V1280H744.85V1280H745.97V1280H747.08V1280H748.2V1264.85H749.31V1249.7H750.43V1264.85H751.54V1274.95H752.66V1280H753.77V1280H754.89V1280H756V1274.95H757.12V1280H758.23V1280H759.35V1280H760.47V1280H761.58V1274.95H762.7V1274.95H763.81V1280H764.93V1280H766.04V1280H767.16V1280H768.27V1280H769.39V1285.05H770.5V1259.8H771.62V1239.6H772.73V1254.75H773.85V1264.85H774.97V1274.95H776.08V1274.95H777.2V1274.95H778.31V1274.95H779.43V1274.95H780.54V1274.95H781.66V1274.95H782.77V1274.95H783.89V1280H785V1274.95H786.12V1274.95H787.23V1280H788.35V1274.95H789.46V1274.95H790.58V1274.95H791.7V1259.8H792.81V1239.6H793.93V1254.75H795.04V1259.8H796.16V1269.9H797.27V1274.95H798.39V1274.95H799.5V1274.95H800.62V1274.95H801.73V1274.95H802.85V1274.95H803.96V1274.95H805.08V1269.9H806.2V1274.95H807.31V1274.95H808.43V1259.8H809.54V1244.65H810.66V1269.9H811.77V1244.65H812.89V1259.8H814V1264.85H815.12V1264.85H816.23V1259.8H817.35V1254.75H818.46V1264.85H819.58V1269.9H820.7V1269.9H821.81V1269.9H822.93V1264.85H824.04V1264.85H825.16V1264.85H826.27V1269.9H827.39V1269.9H828.5V1234.55H829.62V1249.7H830.73V1264.85H831.85V1269.9H832.96V1264.85H834.08V1269.9H835.2V1264.85H836.31V1259.8H837.43V1264.85H838.54V1269.9H839.66V1264.85H840.77V1269.9H841.89V1269.9H843V1264.85H844.12V1274.95H845.23V1254.75H846.35V1239.6H847.46V1249.7H848.58V1259.8H849.7V1269.9H850.81V1269.9H851.93V1264.85H853.04V1264.85H854.16V1264.85H855.27V1259.8H856.39V1269.9H857.5V1269.9H858.62V1264.85H859.73V1269.9H860.85V1269.9H861.96V1269.9H863.08V1254.75H864.2V1239.6H865.31V1254.75H866.43V1264.85H867.54V1269.9H868.66V1269.9H869.77V1264.85H870.89V1269.9H872V1269.9H873.12V1269.9H874.23V1269.9H875.35V1269.9H876.46V1239.6H877.58V1234.55H878.7V1249.7H879.81V1249.7H880.93V1249.7H882.04V1249.7H883.16V1239.6H884.27V1224.45H885.39V1234.55H886.5V1244.65H887.62V1249.7H888.73V1249.7H889.85V1249.7H890.96V1320.4ZM1038.19 1320.4V1264.85H1039.31V1259.8H1040.42V1264.85H1041.54V1264.85H1042.66V1264.85H1043.77V1264.85H1044.89V1274.95H1046V1274.95H1047.12V1274.95H1048.23V1274.95H1049.35V1274.95H1050.46V1274.95H1051.58V1274.95H1052.69V1274.95H1053.81V1274.95H1054.92V1274.95H1056.04V1274.95H1057.16V1280H1058.27V1274.95H1059.39V1274.95H1060.5V1274.95H1061.62V1280H1062.73V1274.95H1063.85V1274.95H1064.96V1274.95H1066.08V1274.95H1067.19V1274.95H1068.31V1274.95H1069.42V1274.95H1070.54V1274.95H1071.66V1274.95H1072.77V1269.9H1073.89V1274.95H1075V1274.95H1076.12V1280H1077.23V1274.95H1078.35V1280H1079.46V1274.95H1080.58V1274.95H1081.69V1274.95H1082.81V1274.95H1083.92V1274.95H1085.04V1274.95H1086.16V1274.95H1087.27V1274.95H1088.39V1274.95H1089.5V1280H1090.62V1269.9H1091.73V1280H1092.85V1274.95H1093.96V1274.95H1095.08V1274.95H1096.19V1274.95H1097.31V1274.95H1098.42V1274.95H1099.54V1269.9H1100.66V1274.95H1101.77V1274.95H1102.89V1274.95H1104V1274.95H1105.12V1274.95H1106.23V1269.9H1107.35V1274.95H1108.46V1274.95H1109.58V1274.95H1110.69V1274.95H1111.81V1269.9H1112.92V1269.9H1114.04V1269.9H1115.16V1269.9H1116.27V1249.7H1117.39V1264.85H1118.5V1269.9H1119.62V1269.9H1120.73V1269.9H1121.85V1269.9H1122.96V1269.9H1124.08V1239.6H1125.19V1249.7H1126.31V1254.75H1127.42V1269.9H1128.54V1269.9H1129.65V1244.65H1130.77V1254.75H1131.89V1269.9H1133V1269.9H1134.12V1264.85H1135.23V1234.55H1136.35V1244.65H1137.46V1254.75H1138.58V1264.85H1139.69V1264.85H1140.81V1269.9H1141.92V1244.65H1143.04V1254.75H1144.15V1259.8H1145.27V1269.9H1146.39V1269.9H1147.5V1269.9H1148.62V1269.9H1149.73V1269.9H1150.85V1244.65H1151.96V1254.75H1153.08V1269.9H1154.19V1269.9H1155.31V1269.9H1156.42V1264.85H1157.54V1269.9H1158.65V1259.8H1159.77V1244.65H1160.89V1254.75H1162V1259.8H1163.12V1244.65H1164.23V1254.75H1165.35V1264.85H1166.46V1269.9H1167.58V1274.95H1168.69V1269.9H1169.81V1274.95H1170.92V1244.65H1172.04V1254.75H1173.15V1264.85H1174.27V1239.6H1175.39V1249.7H1176.5V1259.8H1177.62V1254.75H1178.73V1269.9H1179.85V1269.9H1180.96V1269.9H1182.08V1269.9H1183.19V1259.8H1184.31V1244.65H1185.42V1254.75H1186.54V1269.9H1187.65V1269.9H1188.77V1269.9H1189.89V1264.85H1191V1244.65H1192.12V1254.75H1193.23V1269.9H1194.35V1269.9H1195.46V1269.9H1196.58V1254.75H1197.69V1239.6H1198.81V1249.7H1199.92V1264.85H1201.04V1269.9H1202.15V1269.9H1203.27V1269.9H1204.39V1269.9H1205.5V1249.7H1206.62V1234.55H1207.73V1244.65H1208.85V1259.8H1209.96V1269.9H1211.08V1269.9H1212.19V1320.4ZM1359.42 1320.4V1269.9H1360.54V1269.9H1361.65V1269.9H1362.77V1269.9H1363.88V1269.9H1365V1269.9H1366.11V1269.9H1367.23V1269.9H1368.35V1269.9H1369.46V1259.8H1370.58V1244.65H1371.69V1254.75H1372.81V1264.85H1373.92V1269.9H1375.04V1269.9H1376.15V1264.85H1377.27V1269.9H1378.38V1269.9H1379.5V1274.95H1380.61V1269.9H1381.73V1274.95H1382.85V1269.9H1383.96V1269.9H1385.08V1274.95H1386.19V1274.95H1387.31V1274.95H1388.42V1274.95H1389.54V1274.95H1390.65V1280H1391.77V1269.9H1392.88V1264.85H1394V1254.75H1395.11V1269.9H1396.23V1274.95H1397.35V1274.95H1398.46V1274.95H1399.58V1274.95H1400.69V1269.9H1401.81V1269.9H1402.92V1274.95H1404.04V1274.95H1405.15V1269.9H1406.27V1269.9H1407.38V1269.9H1408.5V1274.95H1409.61V1274.95H1410.73V1274.95H1411.85V1274.95H1412.96V1264.85H1414.08V1274.95H1415.19V1274.95H1416.31V1274.95H1417.42V1274.95H1418.54V1274.95H1419.65V1269.9H1420.77V1269.9H1421.88V1274.95H1423V1269.9H1424.11V1274.95H1425.23V1274.95H1426.35V1274.95H1427.46V1259.8H1428.58V1244.65H1429.69V1254.75H1430.81V1259.8H1431.92V1274.95H1433.04V1269.9H1434.15V1274.95H1435.27V1274.95H1436.38V1274.95H1437.5V1269.9H1438.61V1274.95H1439.73V1274.95H1440.85V1274.95H1441.96V1269.9H1443.08V1269.9H1444.19V1274.95H1445.31V1259.8H1446.42V1244.65H1447.54V1259.8H1448.65V1264.85H1449.77V1274.95H1450.88V1269.9H1452V1274.95H1453.11V1280H1454.23V1280H1455.35V1280H1456.46V1274.95H1457.58V1280H1458.69V1274.95H1459.81V1244.65H1460.92V1254.75H1462.04V1264.85H1463.15V1274.95H1464.27V1280H1465.38V1274.95H1466.5V1274.95H1467.61V1274.95H1468.73V1280H1469.84V1280H1470.96V1280H1472.08V1274.95H1473.19V1269.9H1474.31V1254.75H1475.42V1264.85H1476.54V1274.95H1477.65V1274.95H1478.77V1274.95H1479.88V1269.9H1481V1274.95H1482.11V1280H1483.23V1274.95H1484.34V1280H1485.46V1274.95H1486.58V1280H1487.69V1254.75H1488.81V1264.85H1489.92V1269.9H1491.04V1274.95H1492.15V1274.95H1493.27V1274.95H1494.38V1280H1495.5V1280H1496.61V1280H1497.73V1280H1498.84V1274.95H1499.96V1264.85H1501.08V1249.7H1502.19V1259.8H1503.31V1274.95H1504.42V1274.95H1505.54V1274.95H1506.65V1280H1507.77V1274.95H1508.88V1280H1510V1274.95H1511.11V1280H1512.23V1259.8H1513.34V1244.65H1514.46V1254.75H1515.58V1269.9H1516.69V1280H1517.81V1280H1518.92V1280H1520.04V1274.95H1521.15V1280H1522.27V1280H1523.38V1274.95H1524.5V1274.95H1525.61V1280H1526.73V1264.85H1527.84V1249.7H1528.96V1259.8H1530.08V1274.95H1531.19V1274.95H1532.31V1274.95H1533.42V1320.4ZM1680.65 1320.4V1264.85H1681.77V1264.85H1682.88V1264.85H1684V1264.85H1685.11V1259.8H1686.23V1264.85H1687.34V1269.9H1688.46V1280H1689.57V1280H1690.69V1280H1691.8V1280H1692.92V1274.95H1694.04V1280H1695.15V1280H1696.27V1280H1697.38V1280H1698.5V1280H1699.61V1280H1700.73V1280H1701.84V1280H1702.96V1280H1704.07V1280H1705.19V1280H1706.3V1280H1707.42V1280H1708.54V1280H1709.65V1285.05H1710.77V1280H1711.88V1280H1713V1280H1714.11V1274.95H1715.23V1280H1716.34V1280H1717.46V1280H1718.57V1280H1719.69V1285.05H1720.8V1280H1721.92V1280H1723.04V1280H1724.15V1280H1725.27V1280H1726.38V1274.95H1727.5V1280H1728.61V1280H1729.73V1280H1730.84V1280H1731.96V1285.05H1733.07V1280H1734.19V1280H1735.3V1285.05H1736.42V1285.05H1737.54V1280H1738.65V1285.05H1739.77V1285.05H1740.88V1280H1742V1285.05H1743.11V1285.05H1744.23V1280H1745.34V1280H1746.46V1280H1747.57V1280H1748.69V1274.95H1749.8V1285.05H1750.92V1280H1752.04V1285.05H1753.15V1274.95H1754.27V1285.05H1755.38V1280H1756.5V1285.05H1757.61V1280H1758.73V1280H1759.84V1285.05H1760.96V1285.05H1762.07V1285.05H1763.19V1285.05H1764.3V1285.05H1765.42V1280H1766.54V1280H1767.65V1274.95H1768.77V1280H1769.88V1285.05H1771V1285.05H1772.11V1280H1773.23V1285.05H1774.34V1280H1775.46V1274.95H1776.57V1274.95H1777.69V1269.9H1778.8V1280H1779.92V1274.95H1781.04V1280H1782.15V1274.95H1783.27V1280H1784.38V1280H1785.5V1285.05H1786.61V1280H1787.73V1274.95H1788.84V1280H1789.96V1280H1791.07V1280H1792.19V1280H1793.3V1274.95H1794.42V1280H1795.54V1280H1796.65V1274.95H1797.77V1269.9H1798.88V1259.8H1800V1269.9H1801.11V1280H1802.23V1280H1803.34V1274.95H1804.46V1280H1805.57V1280H1806.69V1280H1807.8V1280H1808.92V1280H1810.03V1280H1811.15V1280H1812.27V1274.95H1813.38V1274.95H1814.5V1269.9H1815.61V1254.75H1816.73V1264.85H1817.84V1274.95H1818.96V1280H1820.07V1280H1821.19V1285.05H1822.3V1280H1823.42V1269.9H1824.53V1280H1825.65V1280H1826.77V1280H1827.88V1264.85H1829V1254.75H1830.11V1264.85H1831.23V1280H1832.34V1280H1833.46V1285.05H1834.57V1280H1835.69V1285.05H1836.8V1280H1837.92V1274.95H1839.03V1280H1840.15V1259.8H1841.27V1249.7H1842.38V1264.85H1843.5V1274.95H1844.61V1285.05H1845.73V1280H1846.84V1280H1847.96V1259.8H1849.07V1244.65H1850.19V1259.8H1851.3V1269.9H1852.42V1259.8H1853.53V1234.55H1854.65V1320.4ZM2001.88 1320.4V1244.65H2003V1244.65H2004.11V1239.6H2005.23V1244.65H2006.34V1244.65H2007.46V1254.75H2008.57V1254.75H2009.69V1254.75H2010.8V1254.75H2011.92V1249.7H2013.03V1254.75H2014.15V1259.8H2015.26V1264.85H2016.38V1259.8H2017.5V1259.8H2018.61V1259.8H2019.73V1259.8H2020.84V1269.9H2021.96V1259.8H2023.07V1259.8H2024.19V1264.85H2025.3V1254.75H2026.42V1259.8H2027.53V1259.8H2028.65V1259.8H2029.76V1259.8H2030.88V1264.85H2031.99V1259.8H2033.11V1264.85H2034.23V1259.8H2035.34V1280H2036.46V1274.95H2037.57V1280H2038.69V1280H2039.8V1274.95H2040.92V1274.95H2042.03V1274.95H2043.15V1280H2044.26V1274.95H2045.38V1280H2046.49V1280H2047.61V1274.95H2048.73V1274.95H2049.84V1274.95H2050.96V1280H2052.07V1280H2053.19V1280H2054.3V1274.95H2055.42V1280H2056.53V1274.95H2057.65V1274.95H2058.76V1285.05H2059.88V1285.05H2060.99V1274.95H2062.11V1280H2063.23V1280H2064.34V1280H2065.46V1280H2066.57V1280H2067.69V1274.95H2068.8V1274.95H2069.92V1269.9H2071.03V1274.95H2072.15V1274.95H2073.26V1280H2074.38V1274.95H2075.49V1274.95H2076.61V1274.95H2077.73V1274.95H2078.84V1274.95H2079.96V1274.95H2081.07V1274.95H2082.19V1274.95H2083.3V1280H2084.42V1280H2085.53V1285.05H2086.65V1280H2087.76V1280H2088.88V1280H2089.99V1280H2091.11V1280H2092.23V1280H2093.34V1274.95H2094.46V1280H2095.57V1280H2096.69V1274.95H2097.8V1269.9H2098.92V1274.95H2100.03V1274.95H2101.15V1274.95H2102.26V1274.95H2103.38V1274.95H2104.49V1274.95H2105.61V1274.95H2106.73V1280H2107.84V1280H2108.96V1280H2110.07V1280H2111.19V1280H2112.3V1285.05H2113.42V1280H2114.53V1285.05H2115.65V1280H2116.76V1285.05H2117.88V1280H2118.99V1290.1H2120.11V1285.05H2121.23V1290.1H2122.34V1285.05H2123.46V1285.05H2124.57V1290.1H2125.69V1285.05H2126.8V1285.05H2127.92V1280H2129.03V1290.1H2130.15V1285.05H2131.26V1290.1H2132.38V1285.05H2133.49V1280H2134.61V1285.05H2135.73V1285.05H2136.84V1290.1H2137.96V1290.1H2139.07V1285.05H2140.19V1285.05H2141.3V1285.05H2142.42V1290.1H2143.53V1285.05H2144.65V1290.1H2145.76V1285.05H2146.88V1285.05H2147.99V1285.05H2149.11V1290.1H2150.22V1285.05H2151.34V1290.1H2152.46V1285.05H2153.57V1285.05H2154.69V1290.1H2155.8V1290.1H2156.92V1285.05H2158.03V1280H2159.15V1285.05H2160.26V1280H2161.38V1290.1H2162.49V1285.05H2163.61V1285.05H2164.72V1285.05H2165.84V1290.1H2166.96V1285.05H2168.07V1274.95H2169.19V1259.8H2170.3V1274.95H2171.42V1280H2172.53V1285.05H2173.65V1280H2174.76V1280H2175.88V1320.4Z" fill="#a0ecc0"/>
<path d="M890.96 1320.4V1209.3H892.08V1204.25H893.2V1199.2H894.31V1199.2H895.43V1194.15H896.54V1214.35H897.66V1204.25H898.77V1173.95H899.89V1204.25H901V1219.4H902.12V1204.25H903.23V1204.25H904.35V1204.25H905.46V1199.2H906.58V1194.15H907.69V1184.05H908.81V1143.65H909.93V1173.95H911.04V1189.1H912.16V1113.35H913.27V1158.8H914.39V1037.6H915.5V1113.35H916.62V1047.7H917.73V1128.5H918.85V1078H919.96V1052.75H921.08V992.15H922.19V1088.1H923.31V956.8H924.43V1133.55H925.54V1098.2H926.66V1143.65H927.77V1012.35H928.89V906.3H930V865.9H931.12V931.55H932.23V1118.4H933.35V1083.05H934.46V1108.3H935.58V1133.55H936.69V1128.5H937.81V1093.15H938.93V1138.6H940.04V1138.6H941.16V1143.65H942.27V1113.35H943.39V1057.8H944.5V1052.75H945.62V1138.6H946.73V1123.45H947.85V1007.3H948.96V1163.85H950.08V1027.5H951.19V1158.8H952.31V1143.65H953.43V1173.95H954.54V1189.1H955.66V1163.85H956.77V1184.05H957.89V1179H959V1168.9H960.12V1153.75H961.23V1143.65H962.35V1179H963.46V1153.75H964.58V1179H965.69V1133.55H966.81V1148.7H967.93V1179H969.04V1189.1H970.16V1148.7H971.27V1138.6H972.39V1113.35H973.5V1108.3H974.62V1118.4H975.73V1012.35H976.85V1143.65H977.96V1138.6H979.08V1108.3H980.19V1093.15H981.31V1047.7H982.43V1032.55H983.54V966.9H984.66V1012.35H985.77V987.1H986.89V1037.6H988V1118.4H989.12V1098.2H990.23V921.45H991.35V1108.3H992.46V1032.55H993.58V1052.75H994.69V1108.3H995.81V1083.05H996.93V896.2H998.04V1113.35H999.16V1108.3H1000.27V961.85H1001.39V1088.1H1002.5V1027.5H1003.62V1103.25H1004.73V1148.7H1005.85V1123.45H1006.96V1138.6H1008.08V1143.65H1009.19V1042.65H1010.31V1067.9H1011.43V1153.75H1012.54V1128.5H1013.66V1032.55H1014.77V1168.9H1015.89V1224.45H1017V1194.15H1018.12V1189.1H1019.23V1078H1020.35V1072.95H1021.46V1209.3H1022.58V1199.2H1023.69V1204.25H1024.81V1194.15H1025.92V1184.05H1027.04V1148.7H1028.16V1179H1029.27V1234.55H1030.39V1199.2H1031.5V1239.6H1032.62V1234.55H1033.73V1249.7H1034.85V1249.7H1035.96V1249.7H1037.08V1264.85H1038.19V1320.4ZM1212.19 1320.4V1199.2H1213.31V1209.3H1214.42V1199.2H1215.54V1189.1H1216.65V1194.15H1217.77V1204.25H1218.89V1173.95H1220V1173.95H1221.12V1113.35H1222.23V1158.8H1223.35V1022.45H1224.46V1012.35H1225.58V926.5H1226.69V1098.2H1227.81V926.5H1228.92V1047.7H1230.04V1093.15H1231.15V1007.3H1232.27V1072.95H1233.39V1098.2H1234.5V1057.8H1235.62V886.1H1236.73V1093.15H1237.85V1047.7H1238.96V1113.35H1240.08V1012.35H1241.19V997.2H1242.31V1133.55H1243.42V946.7H1244.54V1072.95H1245.65V1072.95H1246.77V1093.15H1247.88V1042.65H1249V1067.9H1250.12V1133.55H1251.23V921.45H1252.35V1173.95H1253.46V1148.7H1254.58V1113.35H1255.69V921.45H1256.81V1108.3H1257.92V1093.15H1259.04V1088.1H1260.15V1103.25H1261.27V1128.5H1262.38V961.85H1263.5V881.05H1264.62V951.75H1265.73V946.7H1266.85V1148.7H1267.96V1133.55H1269.08V1022.45H1270.19V1037.6H1271.31V1093.15H1272.42V1168.9H1273.54V1158.8H1274.65V1103.25H1275.77V1072.95H1276.88V1067.9H1278V936.6H1279.12V1113.35H1280.23V1078H1281.35V1118.4H1282.46V1103.25H1283.58V1078H1284.69V1133.55H1285.81V1168.9H1286.92V1173.95H1288.04V1163.85H1289.15V1168.9H1290.27V1093.15H1291.38V1163.85H1292.5V1138.6H1293.62V1093.15H1294.73V1143.65H1295.85V1163.85H1296.96V1138.6H1298.08V1113.35H1299.19V1138.6H1300.31V825.5H1301.42V1052.75H1302.54V1199.2H1303.65V1173.95H1304.77V1168.9H1305.88V1148.7H1307V1042.65H1308.12V1138.6H1309.23V1067.9H1310.35V1168.9H1311.46V997.2H1312.58V961.85H1313.69V966.9H1314.81V966.9H1315.92V1098.2H1317.04V1083.05H1318.15V992.15H1319.27V1037.6H1320.38V1057.8H1321.5V1123.45H1322.62V997.2H1323.73V1007.3H1324.85V1098.2H1325.96V886.1H1327.08V1093.15H1328.19V946.7H1329.31V1093.15H1330.42V987.1H1331.54V951.75H1332.65V987.1H1333.77V1138.6H1334.88V1088.1H1336V1072.95H1337.12V1083.05H1338.23V1113.35H1339.35V1168.9H1340.46V1148.7H1341.58V1133.55H1342.69V1128.5H1343.81V1078H1344.92V1153.75H1346.04V1143.65H1347.15V1118.4H1348.27V1133.55H1349.38V1168.9H1350.5V1163.85H1351.61V1173.95H1352.73V1138.6H1353.85V1138.6H1354.96V1118.4H1356.08V1163.85H1357.19V1143.65H1358.31V1224.45H1359.42V1320.4ZM1533.42 1320.4V1239.6H1534.54V1269.9H1535.65V1244.65H1536.77V1219.4H1537.88V1224.45H1539V1143.65H1540.11V1189.1H1541.23V1204.25H1542.34V1194.15H1543.46V1133.55H1544.58V1184.05H1545.69V1214.35H1546.81V1219.4H1547.92V1194.15H1549.04V1168.9H1550.15V1118.4H1551.27V1179H1552.38V1184.05H1553.5V1204.25H1554.61V1093.15H1555.73V1027.5H1556.84V1173.95H1557.96V1108.3H1559.08V1184.05H1560.19V1204.25H1561.31V1042.65H1562.42V1168.9H1563.54V1153.75H1564.65V1173.95H1565.77V1189.1H1566.88V1163.85H1568V1199.2H1569.11V1204.25H1570.23V1194.15H1571.34V1189.1H1572.46V1209.3H1573.58V1209.3H1574.69V1199.2H1575.81V1199.2H1576.92V1173.95H1578.04V1194.15H1579.15V1153.75H1580.27V1128.5H1581.38V1093.15H1582.5V1027.5H1583.61V1194.15H1584.73V1209.3H1585.84V1194.15H1586.96V1214.35H1588.07V1204.25H1589.19V1204.25H1590.31V1189.1H1591.42V1194.15H1592.54V1199.2H1593.65V1189.1H1594.77V1204.25H1595.88V1214.35H1597V1194.15H1598.11V1179H1599.23V1173.95H1600.34V1072.95H1601.46V1204.25H1602.57V1113.35H1603.69V1118.4H1604.81V1138.6H1605.92V1052.75H1607.04V1184.05H1608.15V1194.15H1609.27V1184.05H1610.38V1168.9H1611.5V1173.95H1612.61V1173.95H1613.73V1163.85H1614.84V1148.7H1615.96V1128.5H1617.07V1133.55H1618.19V1123.45H1619.31V1133.55H1620.42V1148.7H1621.54V1199.2H1622.65V1184.05H1623.77V1133.55H1624.88V1143.65H1626V1138.6H1627.11V1153.75H1628.23V1173.95H1629.34V1214.35H1630.46V1148.7H1631.57V1123.45H1632.69V992.15H1633.81V1163.85H1634.92V1047.7H1636.04V1017.4H1637.15V1088.1H1638.27V850.75H1639.38V1012.35H1640.5V1088.1H1641.61V997.2H1642.73V1078H1643.84V1118.4H1644.96V997.2H1646.07V1143.65H1647.19V1168.9H1648.31V870.95H1649.42V1012.35H1650.54V1184.05H1651.65V1148.7H1652.77V1153.75H1653.88V1204.25H1655V1088.1H1656.11V1189.1H1657.23V1062.85H1658.34V1158.8H1659.46V1194.15H1660.57V1184.05H1661.69V1214.35H1662.81V1219.4H1663.92V1214.35H1665.04V1224.45H1666.15V1249.7H1667.27V1219.4H1668.38V1057.8H1669.5V1078H1670.61V1254.75H1671.73V1189.1H1672.84V1067.9H1673.96V1194.15H1675.07V1184.05H1676.19V1229.5H1677.31V1234.55H1678.42V1259.8H1679.54V1259.8H1680.65V1320.4ZM1854.65 1320.4V1224.45H1855.77V1209.3H1856.88V1219.4H1858V1199.2H1859.11V1199.2H1860.23V1214.35H1861.34V1204.25H1862.46V1224.45H1863.57V1199.2H1864.69V1199.2H1865.8V1214.35H1866.92V1189.1H1868.03V1173.95H1869.15V1179H1870.27V1143.65H1871.38V1133.55H1872.5V1143.65H1873.61V1062.85H1874.73V1052.75H1875.84V1103.25H1876.96V961.85H1878.07V1138.6H1879.19V1148.7H1880.3V1103.25H1881.42V941.65H1882.53V1057.8H1883.65V1133.55H1884.77V1168.9H1885.88V1128.5H1887V1158.8H1888.11V1047.7H1889.23V946.7H1890.34V1072.95H1891.46V1098.2H1892.57V1088.1H1893.69V901.25H1894.8V1062.85H1895.92V1108.3H1897.03V1143.65H1898.15V1189.1H1899.27V1163.85H1900.38V1168.9H1901.5V1194.15H1902.61V1189.1H1903.73V865.9H1904.84V1148.7H1905.96V1083.05H1907.07V1083.05H1908.19V1194.15H1909.3V1108.3H1910.42V1163.85H1911.53V1209.3H1912.65V1153.75H1913.76V1153.75H1914.88V1189.1H1916V1123.45H1917.11V1148.7H1918.23V1194.15H1919.34V1072.95H1920.46V1118.4H1921.57V951.75H1922.69V1163.85H1923.8V1148.7H1924.92V1194.15H1926.03V1173.95H1927.15V1199.2H1928.26V1224.45H1929.38V1224.45H1930.5V1204.25H1931.61V1184.05H1932.73V1179H1933.84V1189.1H1934.96V1133.55H1936.07V1148.7H1937.19V1153.75H1938.3V1148.7H1939.42V1173.95H1940.53V1194.15H1941.65V1179H1942.76V1204.25H1943.88V1163.85H1945V1209.3H1946.11V1209.3H1947.23V1138.6H1948.34V1062.85H1949.46V966.9H1950.57V1133.55H1951.69V1027.5H1952.8V987.1H1953.92V1042.65H1955.03V971.95H1956.15V1027.5H1957.26V941.65H1958.38V1179H1959.5V1042.65H1960.61V1184.05H1961.73V1143.65H1962.84V1148.7H1963.96V1214.35H1965.07V1179H1966.19V1194.15H1967.3V1194.15H1968.42V1027.5H1969.53V1179H1970.65V956.8H1971.76V1123.45H1972.88V1153.75H1974V1113.35H1975.11V1209.3H1976.23V1037.6H1977.34V1173.95H1978.46V1062.85H1979.57V1189.1H1980.69V982.05H1981.8V1012.35H1982.92V1234.55H1984.03V1078H1985.15V1143.65H1986.26V1083.05H1987.38V1189.1H1988.5V1224.45H1989.61V1219.4H1990.73V1239.6H1991.84V1209.3H1992.96V1153.75H1994.07V1194.15H1995.19V1179H1996.3V1219.4H1997.42V1214.35H1998.53V1184.05H1999.65V1153.75H2000.76V1204.25H2001.88V1320.4ZM2175.88 1320.4V1285.05H2176.99V1280H2178.11V1269.9H2179.22V1194.15H2180.34V1189.1H2181.46V1199.2H2182.57V1168.9H2183.69V1012.35H2184.8V1027.5H2185.92V1168.9H2187.03V987.1H2188.15V936.6H2189.26V1138.6H2190.38V1163.85H2191.49V1078H2192.61V1012.35H2193.72V886.1H2194.84V1002.25H2195.96V1002.25H2197.07V946.7H2198.19V1022.45H2199.3V1007.3H2200.42V1002.25H2201.53V1047.7H2202.65V1067.9H2203.76V1103.25H2204.88V1209.3H2205.99V1184.05H2207.11V1209.3H2208.22V982.05H2209.34V1017.4H2210.46V1173.95H2211.57V956.8H2212.69V951.75H2213.8V906.3H2214.92V921.45H2216.03V1113.35H2217.15V1078H2218.26V1118.4H2219.38V982.05H2220.49V906.3H2221.61V1123.45H2222.72V1153.75H2223.84V1108.3H2224.96V961.85H2226.07V971.95H2227.19V1179H2228.3V1199.2H2229.42V1093.15H2230.53V1209.3H2231.65V1219.4H2232.76V1219.4H2233.88V1214.35H2234.99V1088.1H2236.11V1128.5H2237.22V1143.65H2238.34V1194.15H2239.46V1204.25H2240.57V1067.9H2241.69V1148.7H2242.8V1184.05H2243.92V1179H2245.03V1078H2246.15V1189.1H2247.26V1204.25H2248.38V1234.55H2249.49V1234.55H2250.61V1214.35H2251.72V1239.6H2252.84V1254.75H2253.95V1254.75H2255.07V1254.75H2256.19V1254.75H2257.3V1254.75H2258.42V1249.7H2259.53V1249.7H2260.65V1249.7H2261.76V1249.7H2262.88V1229.5H2263.99V1189.1H2265.11V1148.7H2266.22V1173.95H2267.34V1002.25H2268.45V1032.55H2269.57V992.15H2270.69V1042.65H2271.8V1062.85H2272.92V1214.35H2274.03V1214.35H2275.15V1229.5H2276.26V1224.45H2277.38V1229.5H2278.49V1229.5H2279.61V1234.55H2280.72V1234.55H2281.84V1234.55H2282.95V1219.4H2284.07V1224.45H2285.19V1128.5H2286.3V1143.65H2287.42V1148.7H2288.53V1219.4H2289.65V1234.55H2290.76V1173.95H2291.88V1199.2H2292.99V1143.65H2294.11V1123.45H2295.22V1123.45H2296.34V1118.4H2297.45V1118.4H2298.57V1219.4H2299.69V1229.5H2300.8V1229.5H2301.92V1219.4H2303.03V1229.5H2304.15V1224.45H2305.26V1204.25H2306.38V1214.35H2307.49V1229.5H2308.61V1224.45H2309.72V1239.6H2310.84V1264.85H2311.95V1219.4H2313.07V1234.55H2314.19V1254.75H2315.3V1264.85H2316.42V1320.4Z" fill="#238f70"/>
<path d="M167.5 815.4V1321.4" stroke="#505050" stroke-width="1.5"/>
<path d="M167.2 1321.4H2416.8" stroke="#7c7c7c" stroke-width="2"/>
<path d="M158 1320.5H167M158 1269.5H167M158 1219.5H167M158 1168.5H167M158 1118.5H167M158 1067.5H167M158 1017.5H167M158 966.5H167M158 916.5H167M158 865.5H167M158 815.5H167" stroke="#a0a0a0" stroke-width="1.5"/>
<path d="M168.5 1322V1332M489.5 1322V1332M811.5 1322V1332M1132.5 1322V1332M1453.5 1322V1332M1774.5 1322V1332M2096.5 1322V1332" stroke="#a8a8a8" stroke-width="1.5"/>
<text x="145.4" y="1326.9" font-size="21" fill="#333" text-anchor="end" font-weight="normal" textLength="12.09" lengthAdjust="spacingAndGlyphs" >0</text>
<text x="145.4" y="1276.4" font-size="21" fill="#333" text-anchor="end" font-weight="normal" textLength="24.18" lengthAdjust="spacingAndGlyphs" >10</text>
<text x="145.4" y="1225.9" font-size="21" fill="#333" text-anchor="end" font-weight="normal" textLength="24.18" lengthAdjust="spacingAndGlyphs" >20</text>
<text x="145.4" y="1175.4" font-size="21" fill="#333" text-anchor="end" font-weight="normal" textLength="24.18" lengthAdjust="spacingAndGlyphs" >30</text>
<text x="145.4" y="1124.9" font-size="21" fill="#333" text-anchor="end" font-weight="normal" textLength="24.18" lengthAdjust="spacingAndGlyphs" >40</text>
<text x="145.4" y="1074.4" font-size="21" fill="#333" text-anchor="end" font-weight="normal" textLength="24.18" lengthAdjust="spacingAndGlyphs" >50</text>
<text x="145.4" y="1023.9" font-size="21" fill="#333" text-anchor="end" font-weight="normal" textLength="24.18" lengthAdjust="spacingAndGlyphs" >60</text>
<text x="145.4" y="973.4" font-size="21" fill="#333" text-anchor="end" font-weight="normal" textLength="24.18" lengthAdjust="spacingAndGlyphs" >70</text>
<text x="145.4" y="922.9" font-size="21" fill="#333" text-anchor="end" font-weight="normal" textLength="24.18" lengthAdjust="spacingAndGlyphs" >80</text>
<text x="145.4" y="872.4" font-size="21" fill="#333" text-anchor="end" font-weight="normal" textLength="24.18" lengthAdjust="spacingAndGlyphs" >90</text>
<text x="145.4" y="821.9" font-size="21" fill="#333" text-anchor="end" font-weight="normal" textLength="36.27" lengthAdjust="spacingAndGlyphs" >100</text>
<text x="168.2" y="1356.7" font-size="20" fill="#000" text-anchor="middle" font-weight="normal" textLength="79.52" lengthAdjust="spacingAndGlyphs" >sam. 11</text>
<text x="489.43" y="1356.7" font-size="20" fill="#000" text-anchor="middle" font-weight="normal" textLength="75.14" lengthAdjust="spacingAndGlyphs" >dim. 12</text>
<text x="810.66" y="1356.7" font-size="20" fill="#000" text-anchor="middle" font-weight="normal" textLength="68.38" lengthAdjust="spacingAndGlyphs" >lun. 13</text>
<text x="1131.89" y="1356.7" font-size="20" fill="#000" text-anchor="middle" font-weight="normal" textLength="75.52" lengthAdjust="spacingAndGlyphs" >mar. 14</text>
<text x="1453.11" y="1356.7" font-size="20" fill="#000" text-anchor="middle" font-weight="normal" textLength="75.57" lengthAdjust="spacingAndGlyphs" >mer. 15</text>
<text x="1774.34" y="1356.7" font-size="20" fill="#000" text-anchor="middle" font-weight="normal" textLength="68.01" lengthAdjust="spacingAndGlyphs" >jeu. 16</text>
<text x="2095.57" y="1356.7" font-size="20" fill="#000" text-anchor="middle" font-weight="normal" textLength="74.23" lengthAdjust="spacingAndGlyphs" >ven. 17</text>
<text x="0" y="0" font-size="23" fill="#3c3c3c" text-anchor="middle" transform="translate(86 1067.2) rotate(-90)" textLength="29.4" lengthAdjust="spacingAndGlyphs">kW</text>
<rect x="562" y="806" width="411.5" height="57.5" rx="10" fill="#fff" stroke="#7b7b7b" stroke-width="4"/>
<text x="777.5" y="846.3" font-size="28" fill="#000" text-anchor="middle" font-weight="normal" textLength="335" lengthAdjust="spacingAndGlyphs" >Consommation: 3 143 kWh</text>
<rect x="1099.3" y="806" width="411.9" height="57.5" rx="10" fill="#fff" stroke="#7b7b7b" stroke-width="4"/>
<text x="1315.45" y="846.3" font-size="28" fill="#000" text-anchor="middle" font-weight="normal" textLength="188.1" lengthAdjust="spacingAndGlyphs" >P Max :&#160; 98 kW</text>
<rect x="1609.7" y="806" width="411.1" height="57.5" rx="10" fill="#fff" stroke="#7b7b7b" stroke-width="4"/>
<text x="1825.85" y="846.3" font-size="28" fill="#000" text-anchor="middle" font-weight="normal" textLength="159.7" lengthAdjust="spacingAndGlyphs" >P min : 6 kW</text>
<rect x="2322" y="1322" width="116" height="58" fill="#fff"/>
<path d="M2361.5 1343 A13 13 0 1 0 2364 1352 H2350" fill="none" stroke="#0a70b9" stroke-width="5" stroke-linecap="round"/>
<path d="M2369 1345 C2369 1336 2384 1335 2384 1345 C2384 1351 2373 1356 2369 1362.5 H2385.5" fill="none" stroke="#0a70b9" stroke-width="5" stroke-linejoin="round"/>
<path d="M2392.6 1324.8 L2383.6 1338.3 L2391.3 1339.4 L2389.3 1363.2 L2400.2 1338.8 L2392.2 1337.6 Z" fill="#e95a24"/>
<path d="M2404 1339H2424.5L2419.5 1345H2401.5Z M2399 1348.3H2418L2414 1354.2H2396Z M2395 1357.1H2416.8L2412 1363H2392.5Z" fill="#f29222"/>
<text x="2393.7" y="1334.5" font-size="7" fill="#e95a24" text-anchor="start" font-weight="bold" textLength="30.3" lengthAdjust="spacingAndGlyphs" >FRANCE</text>
<rect x="2340" y="1366.2" width="74" height="1" fill="#7ab0e0" fill-opacity="0.7"/>
</svg></body></html>
